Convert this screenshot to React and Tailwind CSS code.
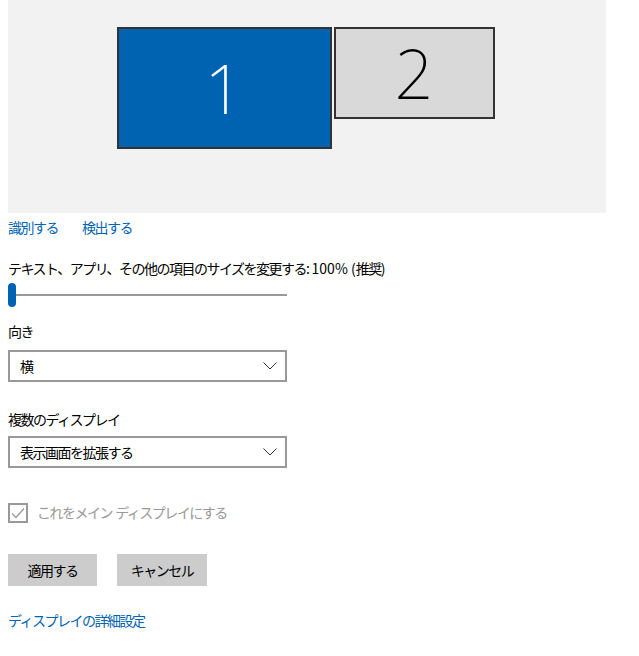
const font = { fontFamily: '"Noto Sans CJK JP", "Noto Sans", sans-serif' };
const txt = "text-[14px] tracking-[-1.5px]";

function Chevron() {
  return (
    <svg viewBox="0 0 14 8" className="h-[8px] w-[14px]" fill="none" stroke="#333" strokeWidth="1">
      <path d="M0.5 0.5 L7 7 L13.5 0.5" />
    </svg>
  );
}

function Dropdown({ value }) {
  return (
    <div className={`flex h-[32px] w-[279px] items-center justify-between border-2 border-[#999999] bg-white pl-[10px] pr-[8px] text-black ${txt}`}>
      <span>{value}</span>
      <Chevron />
    </div>
  );
}

export default function App() {
  return (
    <div className="min-h-screen bg-white text-black" style={font}>
      <div className="px-[8px] pr-[33px]">
        {/* monitor arrangement */}
        <div className="flex h-[213px] items-start justify-center bg-[#f2f2f2] pt-[27px] pr-[3px]">
          <div className="flex items-start gap-[2px]">
            <div className="flex h-[122px] w-[215px] items-center justify-center border-2 border-[#333] bg-[#0063b1] text-white">
              <span className="text-[68px] font-extralight leading-none" style={{ fontFamily: '"Noto Sans", sans-serif' }}>1</span>
            </div>
            <div className="flex h-[92px] w-[161px] items-center justify-center border-2 border-[#333] bg-[#d9d9d9] text-black">
              <span className="text-[68px] font-extralight leading-none" style={{ fontFamily: '"Noto Sans", sans-serif' }}>2</span>
            </div>
          </div>
        </div>

        <div className={`mt-[4px] flex gap-[24px] text-[#0063b1] ${txt}`}>
          <span>識別する</span>
          <span>検出する</span>
        </div>

        <div className={`mt-[20px] ${txt}`}>
          テキスト、アプリ、その他の項目のサイズを変更する:<span className="tracking-normal"> 100% (</span>推奨<span className="tracking-normal">)</span>
        </div>
        <div className="relative mt-[4px] flex h-[24px] w-[279px] items-center">
          <div className="h-[2px] w-full bg-[#999]" />
          <div className="absolute left-0 top-0 h-[24px] w-[8px] rounded-full bg-[#0063b1]" />
        </div>

        <div className={`mt-[14px] ${txt}`}>向き</div>
        <div className="mt-[8px]">
          <Dropdown value="横" />
        </div>

        <div className={`mt-[27px] ${txt}`}>複数のディスプレイ</div>
        <div className="mt-[6px]">
          <Dropdown value="表示画面を拡張する" />
        </div>

        <div className={`mt-[34px] flex items-center gap-[9px] text-[#999] ${txt}`}>
          <div className="flex h-[20px] w-[20px] items-center justify-center border-2 border-[#999]">
            <svg viewBox="0 0 16 16" className="h-[16px] w-[16px]" fill="none" stroke="#999" strokeWidth="1.3">
              <path d="M2 8.5 L6 12.5 L14 3.5" />
            </svg>
          </div>
          <span>
            これをメイン<span className="tracking-normal"> </span>ディスプレイにする
          </span>
        </div>

        <div className={`mt-[31px] flex gap-[20px] ${txt}`}>
          <button className="h-[32px] w-[89px] bg-[#cccccc]">適用する</button>
          <button className="h-[32px] w-[90px] bg-[#cccccc]">キャンセル</button>
        </div>

        <div className={`mt-[24px] text-[#0063b1] ${txt}`}>ディスプレイの詳細設定</div>
      </div>
    </div>
  );
}
